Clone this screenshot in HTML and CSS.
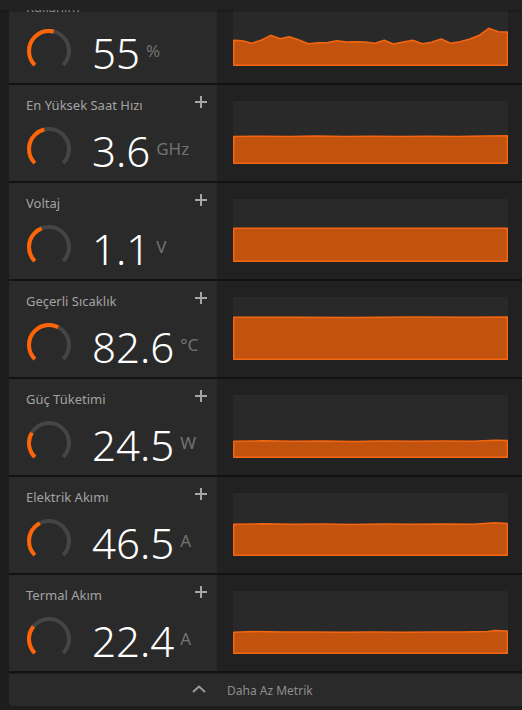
FILE: index.html
```html
<!DOCTYPE html>
<html lang="tr">
<head>
<meta charset="utf-8">
<link rel="stylesheet" href="styles.css">
</head>
<body>
<div class="topband"></div>
<div class="page">
  <div class="list">
    <div class="row">
      <div class="left">
        <div class="head"><span class="title">Kullanım</span><span class="plus"></span></div>
        <div class="main">
          <svg class="gauge" viewBox="0 0 44 44"><path class="track" d="M7.86,36.14 A20,20 0 1 1 36.14,36.14"/><path class="prog" pathLength="100" stroke-dasharray="55 100" d="M7.86,36.14 A20,20 0 1 1 36.14,36.14"/></svg>
          <span class="value">55</span><span class="unit">%</span>
        </div>
      </div>
      <div class="right">
        <svg class="chart" viewBox="0 0 275 63" preserveAspectRatio="none"><path d="M0.75,62.25 L0.75,37.3 L9.3,37.7 L18.7,40.3 L28.7,37 L37.7,32.3 L47,35.7 L56.3,33.7 L65.3,36.7 L75.3,40.7 L85.3,39.7 L93.7,39.7 L103.7,37.7 L113.7,39 L123.7,38.7 L132,39 L142,40.3 L151.3,37.3 L160.3,41 L170.3,39 L179.7,37.3 L189.3,40.7 L198.7,39.3 L208,36 L217.7,40.3 L227,38.7 L237,36 L246.3,32.3 L255.7,25.3 L265.3,28.7 L274.25,29 L274.25,62.25 Z"/></svg>
      </div>
    </div>
    <div class="row">
      <div class="left">
        <div class="head"><span class="title">En Yüksek Saat Hızı</span><span class="plus"></span></div>
        <div class="main">
          <svg class="gauge" viewBox="0 0 44 44"><path class="track" d="M7.86,36.14 A20,20 0 1 1 36.14,36.14"/><path class="prog" pathLength="100" stroke-dasharray="45 100" d="M7.86,36.14 A20,20 0 1 1 36.14,36.14"/></svg>
          <span class="value">3.6</span><span class="unit">GHz</span>
        </div>
      </div>
      <div class="right">
        <svg class="chart" viewBox="0 0 275 63" preserveAspectRatio="none"><path d="M0.75,62.25 L0.75,35.5 L28,35.2 L56,35.6 L84,35.1 L112,35.4 L140,35.3 L168,35.6 L196,35.2 L224,35.4 L252,35 L274.25,34.8 L274.25,62.25 Z"/></svg>
      </div>
    </div>
    <div class="row">
      <div class="left">
        <div class="head"><span class="title">Voltaj</span><span class="plus"></span></div>
        <div class="main">
          <svg class="gauge" viewBox="0 0 44 44"><path class="track" d="M7.86,36.14 A20,20 0 1 1 36.14,36.14"/><path class="prog" pathLength="100" stroke-dasharray="42 100" d="M7.86,36.14 A20,20 0 1 1 36.14,36.14"/></svg>
          <span class="value">1.1</span><span class="unit">V</span>
        </div>
      </div>
      <div class="right">
        <svg class="chart" viewBox="0 0 275 63" preserveAspectRatio="none"><path d="M0.75,62.25 L0.75,29.2 L274.25,29.2 L274.25,62.25 Z"/></svg>
      </div>
    </div>
    <div class="row">
      <div class="left">
        <div class="head"><span class="title">Geçerli Sıcaklık</span><span class="plus"></span></div>
        <div class="main">
          <svg class="gauge" viewBox="0 0 44 44"><path class="track" d="M7.86,36.14 A20,20 0 1 1 36.14,36.14"/><path class="prog" pathLength="100" stroke-dasharray="60 100" d="M7.86,36.14 A20,20 0 1 1 36.14,36.14"/></svg>
          <span class="value">82.6</span><span class="unit">°C</span>
        </div>
      </div>
      <div class="right">
        <svg class="chart" viewBox="0 0 275 63" preserveAspectRatio="none"><path d="M0.75,62.25 L0.75,20.3 L60,20.2 L120,20.4 L180,20.1 L240,20.3 L274.25,20.1 L274.25,62.25 Z"/></svg>
      </div>
    </div>
    <div class="row">
      <div class="left">
        <div class="head"><span class="title">Güç Tüketimi</span><span class="plus"></span></div>
        <div class="main">
          <svg class="gauge" viewBox="0 0 44 44"><path class="track" d="M7.86,36.14 A20,20 0 1 1 36.14,36.14"/><path class="prog" pathLength="100" stroke-dasharray="28 100" d="M7.86,36.14 A20,20 0 1 1 36.14,36.14"/></svg>
          <span class="value">24.5</span><span class="unit">W</span>
        </div>
      </div>
      <div class="right">
        <svg class="chart" viewBox="0 0 275 63" preserveAspectRatio="none"><path d="M0.75,62.25 L0.75,46.2 L30,45.8 L60,46.3 L90,46 L120,46.4 L150,46.1 L180,46.3 L210,46 L240,46.2 L262,45.2 L274.25,45.6 L274.25,62.25 Z"/></svg>
      </div>
    </div>
    <div class="row">
      <div class="left">
        <div class="head"><span class="title">Elektrik Akımı</span><span class="plus"></span></div>
        <div class="main">
          <svg class="gauge" viewBox="0 0 44 44"><path class="track" d="M7.86,36.14 A20,20 0 1 1 36.14,36.14"/><path class="prog" pathLength="100" stroke-dasharray="40 100" d="M7.86,36.14 A20,20 0 1 1 36.14,36.14"/></svg>
          <span class="value">46.5</span><span class="unit">A</span>
        </div>
      </div>
      <div class="right">
        <svg class="chart" viewBox="0 0 275 63" preserveAspectRatio="none"><path d="M0.75,62.25 L0.75,31.3 L30,30.8 L60,31.2 L90,31 L120,31.4 L150,31.1 L180,31.3 L210,30.9 L240,31.2 L262,29.8 L274.25,30.4 L274.25,62.25 Z"/></svg>
      </div>
    </div>
    <div class="row">
      <div class="left">
        <div class="head"><span class="title">Termal Akım</span><span class="plus"></span></div>
        <div class="main">
          <svg class="gauge" viewBox="0 0 44 44"><path class="track" d="M7.86,36.14 A20,20 0 1 1 36.14,36.14"/><path class="prog" pathLength="100" stroke-dasharray="31 100" d="M7.86,36.14 A20,20 0 1 1 36.14,36.14"/></svg>
          <span class="value">22.4</span><span class="unit">A</span>
        </div>
      </div>
      <div class="right">
        <svg class="chart" viewBox="0 0 275 63" preserveAspectRatio="none"><path d="M0.75,62.25 L0.75,41.2 L20,40.6 L50,41.1 L80,40.9 L110,41.2 L140,41 L170,41.2 L200,40.9 L230,41.1 L255,40.5 L262,39.6 L274.25,40 L274.25,62.25 Z"/></svg>
      </div>
    </div>
  </div>
  <div class="more">
    <svg class="chev" viewBox="0 0 14 8"><path d="M1,7 L7,1.5 L13,7"/></svg>
    <span class="more-text">Daha Az Metrik</span>
  </div>
</div>
</body>
</html>
```
FILE: styles.css
```css
html, body {
  margin: 0;
  padding: 0;
  background: #1d1d1d;
  overflow: hidden;
  height: 710px;
}
body {
  font-family: "Noto Sans", "Open Sans", sans-serif;
  position: relative;
}
.topband {
  position: absolute;
  left: 0;
  top: 0;
  width: 522px;
  height: 10px;
  background: #222222;
  box-shadow: 0 1px 2px rgba(0,0,0,0.35);
  z-index: 5;
}
.page {
  margin-left: 9px;
  margin-top: -13px;
  width: 513px;
}
.list {
  display: flex;
  flex-direction: column;
}
.row {
  display: flex;
  height: 96px;
  border-bottom: 2px solid #121212;
}
.left {
  width: 208px;
  box-sizing: border-box;
  background: #2a2a2a;
  padding: 10px 10px 0 17px;
}
.right {
  flex: 1;
  background: #212121;
  padding: 16px 0 0 16px;
}
.head {
  display: flex;
  justify-content: space-between;
  align-items: flex-start;
  height: 20px;
}
.title {
  font-size: 13px;
  line-height: 20px;
  color: #a3a3a3;
}
.plus {
  position: relative;
  width: 12px;
  height: 12px;
  margin-top: 1px;
}
.plus::before, .plus::after {
  content: "";
  position: absolute;
  background: #a6a6a6;
}
.plus::before {
  left: 5px;
  top: 0;
  width: 2px;
  height: 12px;
}
.plus::after {
  left: 0;
  top: 5px;
  width: 12px;
  height: 2px;
}
.main {
  display: flex;
  align-items: center;
  margin-top: 12px;
  height: 44px;
}
.gauge {
  width: 44px;
  height: 44px;
  margin-left: 1px;
  flex: none;
}
.gauge path {
  fill: none;
  stroke-width: 4;
}
.gauge .track {
  stroke: #454545;
}
.gauge .prog {
  stroke: #ff6407;
}
.value {
  margin-left: 21px;
  font-size: 42px;
  font-weight: 300;
  line-height: 44px;
  color: #ffffff;
  position: relative;
  top: 2px;
}
.unit {
  margin-left: 6px;
  font-size: 17px;
  line-height: 20px;
  color: #727272;
}
.chart {
  display: block;
  width: 275px;
  height: 63px;
  background: #292929;
}
.chart path {
  fill: #c2530f;
  stroke: #f46612;
  stroke-width: 1.5;
  stroke-linejoin: round;
}
.more {
  display: flex;
  align-items: center;
  height: 32px;
  margin-top: 1px;
  background: #2a2a2a;
  border-radius: 0 0 0 4px;
  padding-left: 183px;
}
.chev {
  width: 14px;
  height: 8px;
  margin-top: -2px;
}
.chev path {
  fill: none;
  stroke: #9a9a9a;
  stroke-width: 2;
}
.more-text {
  margin-left: 21px;
  font-size: 12px;
  color: #8f8f8f;
}
```
